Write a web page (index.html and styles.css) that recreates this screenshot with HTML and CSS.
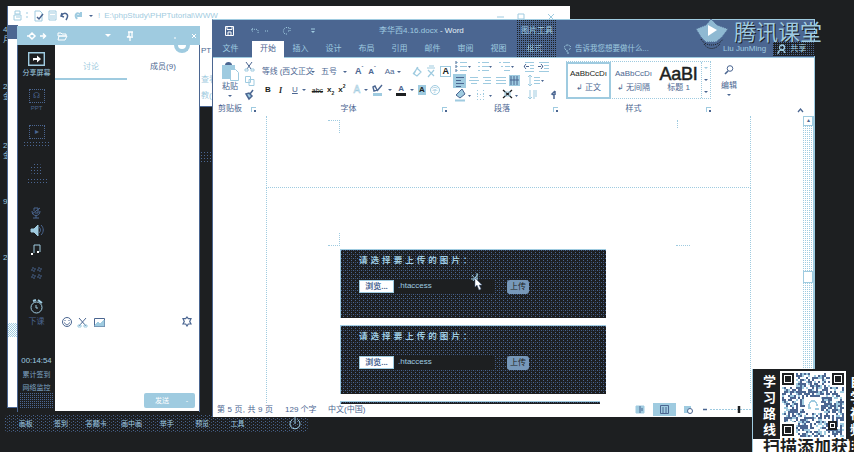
FILE: index.html
```html
<!DOCTYPE html>
<html>
<head>
<meta charset="utf-8">
<title>腾讯课堂</title>
<link rel="stylesheet" href="styles.css">
</head>
<body>
<main class="desktop">
  <div class="edge-text"><span>4</span><span>月</span><span class="e3">2</span><span>金</span><span class="e5">2</span><span>金</span><span class="e7">9</span><span class="e8">2</span></div>

  <section class="explorer">
    <div class="explorer-bar">
      <svg width="76" height="12" viewBox="0 0 76 12" fill="none" stroke="#9fcbe0"><path d="M2 1h5v3H2zM1 5h7v5H1zM3 7h4M14 2v2M14 6v2M22 1h5l2 2v8h-7zM36 1h7v9h-7zM37 3h5M37 6h5M37 8h5"/><path d="M24 7l2 2 4-5M49 3l-1 3 3 1M48 6c4-5 9-2 5 4" stroke="#4b6691" stroke-width="1.5"/><path d="M68 2v4h-4M68 5c-4-4-7 0-4 4" stroke-width="2"/></svg>
      <i class="tri"></i><span class="sep">!</span><span class="path">E:\phpStudy\PHPTutorial\WWW</span>
      <svg class="controls" width="70" height="10" viewBox="0 0 70 10" fill="none" stroke="#9fcbe0"><path d="M1 6h7M22 3h6v5h-6zM52 3l6 6M58 3l-6 6"/></svg>
    </div>
    <div class="explorer-side"><span class="dark">PT</span><span>查看</span><span>教(V</span></div>
  </section>
  <div class="explorer-strip"><i></i></div>
  <div class="shade-text"></div>

  <section class="class-panel">
    <header class="class-head">
      <svg width="54" height="12" viewBox="0 0 54 12" fill="none" stroke="#fff"><path d="M3 6l3-3 3 3-3 3zM1 6h2M14 6h5M17 3.500L19.500 6 17 8.500" stroke-width="1.500"/><path d="M32 3h3l1 1h4v2h-8zM32 10l1-4h8l-2 4z"/></svg>
      <i class="tri white"></i>
      <svg class="pin" width="8" height="10" viewBox="0 0 8 10" fill="none" stroke="#fff"><path d="M2 1h5M3 1v4L1 6h6M6 1v4M4 6v4" stroke-width="1.3"/></svg>
      <svg class="close" width="26" height="8" viewBox="0 0 26 8" stroke="#fff"><path d="M2 6h2M20 2l4 4M24 2l-4 4"/></svg>
    </header>
    <div class="class-body">
      <aside class="rail">
        <svg class="share" width="17" height="14" viewBox="0 0 17 14"><path d="M.7.7h15.6v12.6H.7z" fill="none" stroke="#9fcbe0" stroke-width="1.4"/><path d="M5 9V6h4V3.500l4 3.500-4 3.500V8H6z" fill="#fff"/></svg>
        <span class="rail-main">分享屏幕</span>
        <div class="dot-box r1">☊</div><span class="dim">PPT</span>
        <div class="dot-box r2">▸</div><span class="dim wide"></span>
        <div class="dot-circle"></div><span class="dim wide w2"></span>
        <svg class="tools" width="14" height="76" viewBox="0 0 14 76" fill="none" stroke="#4b6691"><path d="M4 5V2h4v5H5M2 5c0 6 8 6 8 0M6 9v3M3 12h6M2 8l8-6" /><path d="M1 23h3l4-4v11l-4-4H1z" fill="#9fcbe0" stroke="#9fcbe0"/><path d="M9 21c2 2 2 4 0 6M11 19c3 3 3 7 0 10"/><path d="M4 47v-8h6v7" stroke="#9fcbe0"/><path d="M3 48H1M9 46H7" stroke="#fff" stroke-width="2"/><path d="M2 62h3v3H2zM8 62h3v3H8zM2 69h3v3H2zM8 69h3v3H8z" stroke-dasharray="2 1"/></svg>
        <svg class="clock" width="16" height="15" viewBox="0 0 16 15" fill="none" stroke="#9fcbe0"><circle cx="7.500" cy="8.500" r="5.500"/><path d="M4 2l3-1M9 1l4 3" stroke-width="2"/><path d="M7 6v3h2"/></svg>
        <span class="off">下课</span>
        <span class="time">00:14:54</span>
        <span class="stat">累计签到</span><span class="stat two">网络监控</span>
        <div class="rail-foot"></div>
      </aside>
      <div class="chat">
        <div class="chat-tabs"><span class="on">讨论</span><span>成员(9)</span></div>
        <div class="avatar"></div>
        <div class="chat-tools">
          <svg width="46" height="12" viewBox="0 0 46 12" fill="none" stroke="#4b6691"><circle cx="6" cy="6" r="4.500"/><path d="M3.500 6.500c1 3 4 3 5 0M4 4v1M8 4v1"/><path d="M18 2l7 8M25 2l-7 8" /><path d="M17 9h3v2h-3zM23 9h3v2h-3z" stroke="#9fcbe0"/><path d="M33.500 2.500h10v8h-10z"/><path d="M34 9l3-3 2 2 4-4v6h-9z" fill="#9fcbe0" stroke="#9fcbe0"/></svg>
          <svg width="10" height="11" viewBox="0 0 10 11" fill="none" stroke="#4b6691" stroke-width="1.200"><path d="M5 1l1.300 1.700H9L7.700 5.500 9 8H6.300L5 10 3.700 8H1l1.300-2.500L1 2.700h2.700z"/></svg>
        </div>
        <div class="send"><span>发送</span><i>-</i></div>
      </div>
    </div>
  </section>

  <nav class="dock"><span>画板</span><span>签到</span><span>答题卡</span><span>画中画</span><span>举手</span><span>预览</span><span>工具</span>
    <svg width="12" height="13" viewBox="0 0 12 13" fill="none" stroke="#9fcbe0"><path d="M3.500 2.500a5 5 0 1 0 5 0M6 0v7"/></svg>
  </nav>

  <section class="word">
    <header class="word-head">
      <div class="word-title">
        <svg width="100" height="12" viewBox="0 0 100 12" fill="none" stroke="#9fcbe0"><path d="M2.500 1.500h8v9h-8zM4 1.500v3h5v-3M5 10V7h3v3" stroke="#fff"/><g stroke-dasharray="1 1"><path d="M30 3l-2 2 2 2M29 5c5-2 7 0 6 3M42 6h3M66 3c-6-3-8 7-2 6M67 3v3h-3"/></g><path d="M88 4h4" /><path d="M88 6h4l-2 2z" fill="#9fcbe0" stroke="none"/></svg>
        <span class="doc-name">李华西4.16.docx <b>- Word</b></span>
      </div>
      <nav class="word-tabs"><span>文件</span><span class="on">开始</span><span>插入</span><span>设计</span><span>布局</span><span>引用</span><span>邮件</span><span>审阅</span><span>视图</span><span class="fmt">格式</span>
        <svg width="7" height="10" viewBox="0 0 7 10" fill="none" stroke="#9fcbe0"><path d="M2 6C-1 3 1 1 3.500 1S8 3 5 6M2 7h3M3 9h2" stroke-dasharray="2 1"/></svg>
        <span class="tell">告诉我您想要做什么...</span></nav>
    </header>
    <div class="context-tab">图片工具</div>

    <div class="ribbon">
      <div class="group clip">
        <div class="clip-row">
          <div class="paste"><svg width="18" height="20" viewBox="0 0 18 20"><path d="M1 4h13v14H1z" fill="#9fcbe0"/><path d="M4 4c0-4 7-4 7 0z" fill="#4b6691"/><path d="M9.500 8.500h5l3 3v8h-8z" fill="#fff" stroke="#9fcbe0"/></svg><span>粘贴</span><i class="tri"></i></div>
          <svg width="11" height="40" viewBox="0 0 11 40" fill="none" stroke="#4b6691"><path d="M2 1l5 7M8 1L3 8"/><path d="M1 8h3v2H1zM7 8h3v2H7z" stroke="#9fcbe0"/><path d="M1.500 15.500h5v6h-5zM5 18.500h5v6H5z" stroke="#9fcbe0"/><path d="M9 29L6 33M2 33l3-1 3 3-3 3z" fill="#9fcbe0" stroke-width="1.500"/></svg>
        </div>
        <footer><span>剪贴板</span><i class="launch"></i></footer>
      </div>
      <div class="group font">
        <div class="font-one"><span class="face">等线 (西文正文</span><i class="tri"></i><span class="size">五号</span><i class="tri"></i><b class="big">A<sup>ˆ</sup></b><b class="sm">A<sup>ˇ</sup></b><b class="aa">Aa</b><i class="tri"></i>
          <svg width="26" height="13" viewBox="0 0 26 13" fill="none" stroke="#9fcbe0"><path d="M1 9L6 2M5 3l4 4-4 4-3-2zM15 3h8M16 5l6 6M22 5l-6 7M17 1h5" stroke-width="1.200"/></svg><b class="boxed">A</b></div>
        <div class="font-two"><b>B</b><b class="it">I</b><u>U</u><i class="tri"></i><s>abc</s><b>x<sub>2</sub></b><b>x<sup>2</sup></b><span class="outline">A</span><i class="tri"></i>
          <svg width="12" height="12" viewBox="0 0 12 12"><path d="M1 3l2-1 2 4-3 1zM10 1L5 7" fill="none" stroke="#4b6691" stroke-width="1.400"/><path d="M1 9h9v3H1z" fill="#9fcbe0"/></svg><i class="tri"></i><b class="color">A</b><i class="tri"></i><b class="shade">A</b><span class="circle">字</span></div>
        <footer><span>字体</span><i class="launch"></i></footer>
      </div>
      <div class="group para">
        <svg width="110" height="44" viewBox="0 1 110 44" fill="none" stroke="#9fcbe0">
          <path d="M3 5.500h2M7 5.500h7M3 9.500h2M7 9.500h7M3 13.500h2M7 13.500h7M25 5.500h2M29 5.500h7M25 9.500h2M29 9.500h7M25 13.500h2M29 13.500h7M46 5.500h2M50 5.500h7M48 9.500h2M52 9.500h5M51 13.500h6M72 5.500h9M77 8.500h4M77 11.500h4M72 14.500h9M86 5.500h10M91 8.500h5M91 11.500h5M86 14.500h10"/>
          <path d="M76 9.500h-5M73 7l-2 2.500 2 2.500M85 9.500h5M88 7l2 2.500-2 2.500M3 4v11" stroke="#4b6691" stroke-dasharray="3 1"/>
          <path d="M0 17h13v14H0zM56 18h11v11H56z" fill="#9fcbe0" stroke="none"/>
          <path d="M3 20.500h8M3 23.500h5M3 26.500h8M3 29.500h5M58 19v9M61 19v9M64 19v9M57 23h9" stroke="#4b6691"/>
          <path d="M17 20.500h8M16 23.500h10M18 26.500h6M30 20.500h8M32 23.500h6M30 26.500h8M43 20.500h10M43 23.500h10M43 26.500h10M81 20.500h6M81 23.500h6M81 26.500h6M77 18v11M75 20l2-2 2 2M75 27l2 2 2-2"/>
          <path d="M5 36l4-4 3 5-5 4-4-3z" fill="#9fcbe0" stroke="#4b6691"/><path d="M2 43.500h10" stroke-width="2"/>
          <path d="M24.500 33v9M30.500 33v9M24 37.500h8M24 42.500h8" stroke-dasharray="1 2"/>
          <path d="M50 33l9 8M59 33l-9 8" stroke="#1d1f21" stroke-width="1.300"/><path d="M52 35h5v4h-5z"/>
          <path d="M77 33v9M75 40l2 2 2-2M81 33v9M83 33v7"/><path d="M102 34l-3 3 2 1v4M102 34v4" stroke="#4b6691" stroke-width="1.500"/>
          <g fill="#4b6691" stroke="none"><path d="M15 9h3l-1.500 2zM36 9h3l-1.500 2zM58 9h3l-1.500 2zM88 23h3l-1.500 2zM15 38h3l-1.500 2zM36 38h3l-1.500 2zM62 38h3l-1.500 2z"/></g>
        </svg>
        <footer><span>段落</span><i class="launch"></i></footer>
      </div>
      <div class="group styles">
        <div class="gallery">
          <div class="card on"><span>AaBbCcDı</span><em>↲ 正文</em></div>
          <div class="card"><span>AaBbCcDı</span><em>↲ 无间隔</em></div>
          <div class="card"><span class="heading">AaBI</span><em>标题 1</em></div>
          <div class="spin"><i></i><i></i><i></i></div>
        </div>
        <footer><span>样式</span><i class="launch"></i></footer>
      </div>
      <div class="group edit">
        <svg width="10" height="10" viewBox="0 0 10 10" fill="none" stroke="#4b6691"><circle cx="6" cy="3.500" r="2.800"/><path d="M4 6L1 9" stroke-width="1.600"/></svg>
        <span>编辑</span><i class="tri"></i>
      </div>
      <svg class="fold" width="7" height="5" viewBox="0 0 7 5" fill="none" stroke="#4b6691" stroke-width="1.300"><path d="M1 4l2.500-3L6 4"/></svg>
    </div>

    <div class="workspace">
      <div class="paper">
        <div class="sheet first"><i class="mark tl"></i><i class="mark tr"></i></div>
        <div class="sheet second">
          <div class="marks"><i class="mark bl"></i><i class="mark br"></i></div>
          <div class="shot"><p>请选择要上传的图片：</p><div class="form"><span class="browse">浏览...</span><span class="file">.htaccess</span><span class="upload">上传</span></div></div>
          <div class="shot"><p>请选择要上传的图片：</p><div class="form"><span class="browse">浏览...</span><span class="file">.htaccess</span><span class="upload">上传</span></div></div>
          <div class="shot last"></div>
        </div>
      </div>
      <div class="scroll"><div class="up">▴</div><div class="track"></div><div class="thumb"></div><div class="track rest"></div></div>
    </div>
    <footer class="status"><span class="s1">第 5 页, 共 9 页</span><span class="s2">129 个字</span><span class="s3">中文(中国)</span>
      <svg width="126" height="14" viewBox="0 0 126 14" fill="none" stroke="#4b6691"><path d="M2 3h4v7H2zM6 3h4v7H6z" fill="#9fcbe0" stroke="#9fcbe0"/><path d="M6 3v7M8 5v3"/><path d="M19 0h23v13H19z" fill="#9fcbe0" stroke="none"/><path d="M26.500 2.500h8v8h-8zM29 4v6M32 4v6"/><path d="M50 3h7v7h-7z" fill="#9fcbe0" stroke="none"/><circle cx="56" cy="8" r="2.500" fill="#fff"/><path d="M69 6.500h4" stroke-width="1.500"/><path d="M76 6.500h46" stroke="#9fcbe0" stroke-dasharray="2 1"/><path d="M105 3v7" stroke="#1d1f21" stroke-width="2.500"/></svg>
    </footer>
  </section>

  <svg class="cursor" width="18" height="22" viewBox="0 0 18 22"><path d="M2 3l5 6M7 1v6M1 7h7M3 9l5-7" stroke="#9fcbe0" fill="none"/><path d="M5 6v9l2-2 2 5 2-1-2-4h3z" fill="#fff" stroke="#4b6691" stroke-width=".5"/></svg>

  <div class="brand">
    <svg width="36" height="34" viewBox="0 0 36 34"><path d="M17 1l6 6 11 4-6 8-6 5H12l-5-5-5-8 10-4z" fill="#8fb9d2"/><path d="M17 1l6 6 11 4-6 8-6 5H12l-5-5-5-8 10-4z" fill="none" stroke="#4b6691" stroke-dasharray="1 1"/><path d="M7 21c4 8 17 8 22 0M10 26c4 6 11 6 16 0" fill="none" stroke="#1d1f21" stroke-dasharray="1 1"/><path d="M14 7l9 5-9 6z" fill="#fff"/></svg>
    <span>腾讯课堂</span>
  </div>
  <div class="account"><span>Liu JunMing</span><div class="share-btn"><svg width="10" height="11" viewBox="0 0 10 11" fill="none" stroke="#9fcbe0" stroke-width="1.300"><circle cx="5" cy="3.500" r="2.500"/><path d="M1 10c0-5 6-5 7-1"/></svg>共享</div></div>

  <aside class="promo">
    <div class="promo-row"><span class="vertical">学习路线</span><svg id="qr" width="66" height="68" viewBox="0 0 66 68" shape-rendering="crispEdges"></svg><span class="vertical right">自学视频</span></div>
    <div class="promo-line">扫描添加获取</div>
  </aside>
</main>
<script src="qr.js"></script>
</body>
</html>
```
FILE: styles.css
```css
* { box-sizing: border-box; }
body { margin: 0; background: #1d1f21; font-family: "Liberation Sans", "Noto Sans CJK SC", sans-serif; font-size: 8px; line-height: 1; color: #4b6691; }
i, em { font-style: normal; }
svg { display: block; flex: none; }
span { white-space: nowrap; }
p { margin: 0; }
.desktop { position: relative; width: 854px; height: 452px; overflow: hidden; }
.tri { display: block; flex: none; width: 0; height: 0; border: 2px solid transparent; border-top-color: #4b6691; border-bottom: 0; }
.tri.white { border-width: 3px; border-bottom: 0; border-top-color: #fff; }

.edge-text { position: absolute; left: 3px; top: 26px; width: 10px; display: flex; flex-direction: column; gap: 2px; color: #9fcbe0; }
.e3 { margin-top: 37px; }
.e5 { margin-top: 39px; }
.e7 { margin-top: 36px; }
.e8 { margin-top: 46px; }

.explorer { position: absolute; left: 7px; top: 6px; width: 563px; height: 101px; background: #fff; border-left: 1px solid #4b6691; border-bottom: 1px solid #4b6691; }
.explorer-bar { display: flex; align-items: center; height: 19px; padding-left: 5px; color: #9fcbe0; }
.explorer-bar .sep { margin: 0 4px 0 5px; }
.explorer-bar .path { width: 114px; font-size: 8px; }
.controls { margin-left: 278px; }
.explorer-side { display: flex; flex-direction: column; gap: 8px; width: 12px; margin: 22px 0 0 193px; color: #9fcbe0; }
.explorer-side .dark { color: #4b6691; margin-bottom: 13px; }
.explorer-strip { position: absolute; left: 7px; top: 25px; width: 11px; height: 383px; padding-top: 298px; background: #fff; border: solid #4b6691; border-width: 14px 1px 1px; }
.explorer-strip i { display: block; width: 9px; height: 14px; margin-top: -14px; background: repeating-conic-gradient(#9fcbe0 0 25%, #fff 0 50%) 0 0 / 2px 2px; }
.shade-text { position: absolute; left: 200px; top: 151px; width: 12px; height: 11px; background: radial-gradient(circle, #4b6691 35%, transparent 40%) 0 0 / 3px 3px; }

.class-panel { position: absolute; left: 17px; top: 26px; width: 183px; height: 386px; border: solid #4b6691; border-width: 0 1px; }
.class-head { display: flex; align-items: center; height: 19px; padding-left: 9px; background: #9fcbe0; margin: 0 -1px; }
.class-head .tri { margin-left: 25px; }
.pin { margin-left: 15px; }
.close { margin-left: 38px; }
.class-body { display: flex; height: 366px; }
.rail { display: flex; flex-direction: column; align-items: center; width: 37px; flex: none; background: #1d1f21; overflow: hidden; }
.share { margin-top: 7px; }
.rail-main { margin-top: 3px; font-size: 7px; color: #9fcbe0; }
.dot-box { width: 16px; height: 14px; border: 1px dotted #4b6691; text-align: center; line-height: 12px; flex: none; }
.r1 { margin-top: 13px; }
.r2 { margin-top: 12px; }
.dim { height: 8px; margin-top: 2px; font-size: 6px; flex: none; }
.wide { width: 28px; height: 7px; background: radial-gradient(circle, #4b6691 35%, transparent 40%) 0 0 / 3px 3px; }
.w2 { width: 20px; }
.dot-circle { width: 13px; height: 13px; margin-top: 15px; flex: none; border-radius: 50%; background: radial-gradient(circle, #4b6691 35%, transparent 40%) 0 0 / 3px 3px; }
.tools { margin-top: 21px; }
.clock { margin-top: 17px; }
.off { margin-top: 4px; }
.time { margin-top: 31px; font-size: 7.8px; color: #9fcbe0; }
.stat { margin-top: 6px; font-size: 7px; color: #7fa5c4; }
.stat.two { margin-top: 6px; }
.rail-foot { width: 34px; height: 15px; margin-top: 2px; flex: none; background: conic-gradient(from 270deg at 1px 1px, #4b6691 25%, transparent 0) 0 0 / 2px 2px; }
.chat { position: relative; flex: 1; display: flex; flex-direction: column; background: #fff; }
.chat-tabs { display: flex; height: 35px; }
.chat-tabs span { width: 72px; padding-top: 18px; text-align: center; }
.chat-tabs .on { color: #9fcbe0; border-bottom: 2px solid #9fcbe0; }
.avatar { position: absolute; left: 119px; top: 0; width: 16px; height: 8px; border: 4px solid #9fcbe0; border-top: 0; border-radius: 0 0 8px 8px; }
.chat-tools { display: flex; justify-content: space-between; margin-top: 236px; padding: 0 7px 0 6px; }
.send { display: flex; align-items: center; justify-content: space-between; width: 51px; height: 15px; margin: 65px 0 0 89px; padding: 0 7px 0 11px; border-radius: 2px; background: #9fcbe0; color: #fff; font-size: 7px; }

.dock { position: absolute; left: 5px; top: 415px; width: 303px; height: 17px; display: flex; align-items: center; padding-left: 3px; border-radius: 3px; color: #9fcbe0; font-size: 7px; background: conic-gradient(from 270deg at 1px 1px, #4b6691 25%, transparent 0) 0 0 / 4px 3px, conic-gradient(from 270deg at 1px 1px, #3b5072 25%, transparent 0) 2px 1px / 4px 3px, #1d1f21; }
.dock span { width: 35.3px; text-align: center; }
.dock svg { margin-left: 34px; }

.word { position: absolute; left: 212px; top: 19px; width: 603px; height: 398px; background: #fff; border: 1px solid #4b6691; border-top-color: #9fcbe0; border-right-color: #9fcbe0; border-bottom: 0; }
.word-head { height: 38px; background: #4b6691; border-bottom: 1px solid #9fcbe0; color: #9fcbe0; }
.word-title { display: flex; align-items: center; height: 21px; padding-left: 10px; }
.doc-name { margin-left: 56px; }
.doc-name b { font-weight: 400; color: #e3f0f6; }
.word-tabs { display: flex; align-items: center; height: 16px; }
.word-tabs span { width: 33px; text-align: center; }
.word-tabs span:first-child { width: 39px; padding-right: 4px; }
.word-tabs .on { width: 32px; height: 17px; line-height: 15px; background: #fff; color: #4b6691; }
.word-tabs .fmt { width: 39px; }
.word-tabs svg { margin-left: 10px; }
.word-tabs .tell { width: auto; margin-left: 4px; font-size: 7.5px; }
.context-tab { position: absolute; left: 304px; top: 0; width: 40px; height: 37px; padding-top: 7px; text-align: center; color: #9fcbe0; background: conic-gradient(from 270deg at 1px 1px, #1d1f21 25%, transparent 0) 0 0 / 2px 2px; }

.ribbon { position: relative; display: flex; height: 58px; background: #fff; }
.group { display: flex; flex-direction: column; flex: none; }
.group footer { display: flex; align-items: center; margin-top: auto; height: 14px; }
.group footer span { flex: 1; text-align: center; }
.launch { width: 5px; height: 5px; border: solid #9fcbe0; border-width: 1px 0 0 1px; background: linear-gradient(#4b6691, #4b6691) 2px 2px / 2px 2px no-repeat; }
.clip { width: 43px; }
.clip-row { display: flex; padding: 3px 0 0 8px; gap: 5px; }
.clip footer span { flex: none; margin: 0 9px 0 5px; }
.paste { display: flex; flex-direction: column; align-items: center; gap: 2px; width: 18px; }
.paste .tri { margin-top: 2px; }
.font { width: 192px; padding: 7px 0 0 6px; }
.font-one, .font-two { display: flex; align-items: center; height: 13px; }
.font-one .face { width: 49px; overflow: visible; font-size: 7.8px; }
.font-one .size { margin: 0 6px 0 6px; }
.font sup, .font sub { font-size: 5px; line-height: 0; }
.font-one .big { margin-left: 8px; font-size: 9px; }
.font-one .sm { margin-left: 5px; }
.font-one .aa { margin: 0 3px 0 9px; font-weight: 400; }
.font-one svg { margin-left: 11px; }
.font-one .boxed { margin-left: 2px; padding: 0 1px; border: 1px solid #9fcbe0; color: #1d1f21; font-size: 9px; }
.font-two { margin-top: 6px; height: 12px; gap: 4px; color: #1d1f21; }
.font-two b, .font-two u, .font-two s { flex: none; }
.font-two > b:first-child { width: 7px; margin-left: 3px; }
.font-two .it { width: 7px; margin-left: 3px; font: italic bold 8px "Liberation Serif", serif; }
.font-two u { color: #4b6691; margin-left: 2px; }
.font-two s { font-size: 7px; margin-left: 2px; }
.outline { color: #fff; -webkit-text-stroke: .6px #9fcbe0; font-size: 10px; margin-left: 4px; }
.font-two .color { border-bottom: 3px solid #1d1f21; color: #4b6691; padding: 0 2px; }
.font-two .shade { background: #9fcbe0; padding: 1px; font-size: 8px; }
.circle { width: 10px; height: 10px; flex: none; border: 1px solid #9fcbe0; border-radius: 50%; font-size: 6px; line-height: 8px; text-align: center; color: #9fcbe0; }
.font footer { margin-right: 1px; }
.font footer span { padding-right: 7px; }
.para { width: 113px; padding-left: 5px; }
.para footer { margin-right: 3px; }
.para footer span { padding-right: 2px; }
.styles { width: 150px; padding: 3px 0 0 5px; }
.gallery { display: flex; width: 145px; height: 38px; border: 1px dotted #9fcbe0; border-left: 0; }
.card { display: flex; flex-direction: column; align-items: center; width: 45px; padding-top: 3px; }
.card.on { border: 2px solid #9fcbe0; padding-top: 1px; margin-bottom: -1px; }
.card span { display: block; height: 18px; line-height: 18px; color: #1d1f21; letter-spacing: -.05px; }
.card:nth-child(2) span { color: #4b6691; }
.card .heading { font-size: 18px; letter-spacing: -.3px; -webkit-text-stroke: .5px #1d1f21; }
.card em { margin-top: 1px; white-space: nowrap; }
.spin { display: flex; flex-direction: column; justify-content: space-between; align-items: center; width: 9px; padding: 5px 0; border-left: 1px dotted #9fcbe0; }
.spin i { border: 2px solid transparent; border-top-color: #4b6691; border-bottom: 0; }
.spin i:first-child { border-top-color: #9fcbe0; }
.styles footer { margin-left: -5px; }
.edit { align-items: center; width: 36px; padding-top: 7px; }
.edit span { margin-top: 7px; }
.edit .tri { margin-top: 4px; }
.fold { margin: 50px 0 0 50px; }

.workspace { display: flex; justify-content: space-between; height: 287px; }
.paper { width: 485px; margin-left: 53px; }
.sheet { border: dotted #9fcbe0; border-width: 0 1px; width: 485px; }
.first { display: flex; justify-content: space-between; height: 72px; padding: 4px 61px; border-bottom-width: 1px; }
.mark { width: 12px; height: 13px; border: 0 dotted #9fcbe0; }
.tl { border-width: 1px 1px 0 0; }
.tr { border-left-width: 1px; height: 8px; }
.second { height: 215px; padding: 45px 0 0 73px; }
.marks { display: flex; justify-content: space-between; margin: 0 60px 3px -12px; }
.bl { border-width: 0 1px 1px 0; }
.br { border-bottom-width: 1px; width: 14px; }
.shot { width: 266px; height: 69px; margin-bottom: 7px; padding: 5px 0 0 18px; border: solid #9fcbe0; border-width: 1px 0 0 1px; background: conic-gradient(from 270deg at 1px 1px, #4b6691 25%, transparent 0) 0 0 / 4px 4px, conic-gradient(from 270deg at 1px 1px, #4b6691 25%, transparent 0) 2px 2px / 4px 4px, conic-gradient(from 270deg at 1px 1px, #35496a 25%, transparent 0) 2px 0 / 4px 4px, #1d1f21; color: #9fcbe0; }
.shot p { font-size: 8.5px; letter-spacing: 3.05px; font-weight: 700; height: 10px; line-height: 10px; }
.form { display: flex; align-items: center; margin-top: 14px; height: 15px; }
.browse { width: 35px; height: 13px; line-height: 11px; border: 1px solid #9fcbe0; background: #fff; color: #4b6691; text-align: center; font-weight: 700; }
.file { width: 101px; height: 13px; line-height: 12px; padding-left: 4px; background: #1d1f21; color: #9fcbe0; }
.upload { width: 22px; height: 14px; line-height: 13px; margin-left: 12px; border-radius: 3px; background: #7798b9; color: #1d1f21; text-align: center; }
.shot.last { width: 260px; height: 3px; margin: 0; padding: 0; }
.scroll { width: 11px; border-right: 1px solid #9fcbe0; }
.up { height: 10px; border: 1px solid #9fcbe0; font-size: 6px; text-align: center; }
.track { height: 145px; background: conic-gradient(from 270deg at 1px 1px, #9fcbe0 25%, transparent 0) 0 0 / 2px 2px; }
.thumb { height: 12px; border: 1px solid #9fcbe0; background: #fff; }
.track.rest { height: 86px; }
.status { display: flex; align-items: center; height: 14px; padding-left: 4px; }
.s1 { width: 68px; letter-spacing: .15px; }
.s2 { width: 43px; }
.s3 { width: 306px; }

.cursor { position: absolute; left: 470px; top: 272px; }
.brand { position: absolute; left: 694px; top: 18px; display: flex; align-items: flex-start; gap: 4px; color: #9fcbe0; font-size: 22px; }
.brand span { margin-top: 4px; text-shadow: 1px 1px #1d1f21; }
.account { position: absolute; left: 723px; top: 42px; display: flex; align-items: center; gap: 7px; color: #9fcbe0; }
.share-btn { display: flex; align-items: center; gap: 3px; width: 42px; height: 14px; padding-left: 4px; background: conic-gradient(from 270deg at 1px 1px, #4b6691 25%, transparent 0) 0 0 / 2px 2px #1d1f21; }

.promo { position: absolute; left: 752px; top: 369px; width: 102px; height: 83px; background: #1d1f21; color: #fff; overflow: hidden; border-left: 1px solid #9fcbe0; }
.promo-row { display: flex; height: 70px; padding-top: 2px; }
.vertical { width: 13px; margin: 3px 4px 0 10px; font-size: 13px; font-weight: 700; line-height: 16px; white-space: normal; }
.vertical.right { margin: 3px 0 0 4px; flex: none; }
.promo-line { height: 13px; padding-left: 10px; background: #fff; color: #1d1f21; font-size: 17px; line-height: 17px; font-weight: 700; white-space: nowrap; }
```
FILE: qr.js
```js
const svg = document.getElementById('qr');
const rect = (x, y, w, h, fill) => `<rect x="${x}" y="${y}" width="${w}" height="${h}" fill="${fill}"/>`;
let seed = 17;
const next = () => (seed = (seed * 1103515245 + 12345) % 2147483648) / 2147483648;
let out = rect(0, 0, 66, 68, '#fff');
for (let y = 2; y < 66; y += 2) {
  for (let x = 2; x < 64; x += 2) {
    if (next() < 0.62) out += rect(x, y, 2, 2, next() < 0.7 ? '#4b6691' : '#9fcbe0');
  }
}
for (const [x, y] of [[2, 2], [52, 2], [2, 53]]) {
  out += rect(x - 2, y - 2, 16, 16, '#fff') + rect(x, y, 12, 12, '#1d1f21') + rect(x + 2, y + 2, 8, 8, '#fff') + rect(x + 3, y + 3, 6, 6, '#1d1f21');
}
out += rect(48, 50, 9, 9, '#1d1f21') + rect(50, 52, 5, 5, '#fff') + rect(51, 53, 3, 3, '#1d1f21');
out += rect(25, 26, 16, 16, '#fff');
out += '<path d="M29 36c-1-8 8-8 8-1M28 37h3M35 38h4" fill="none" stroke="#9fcbe0" stroke-width="1.5"/>';
svg.innerHTML = out;
```
